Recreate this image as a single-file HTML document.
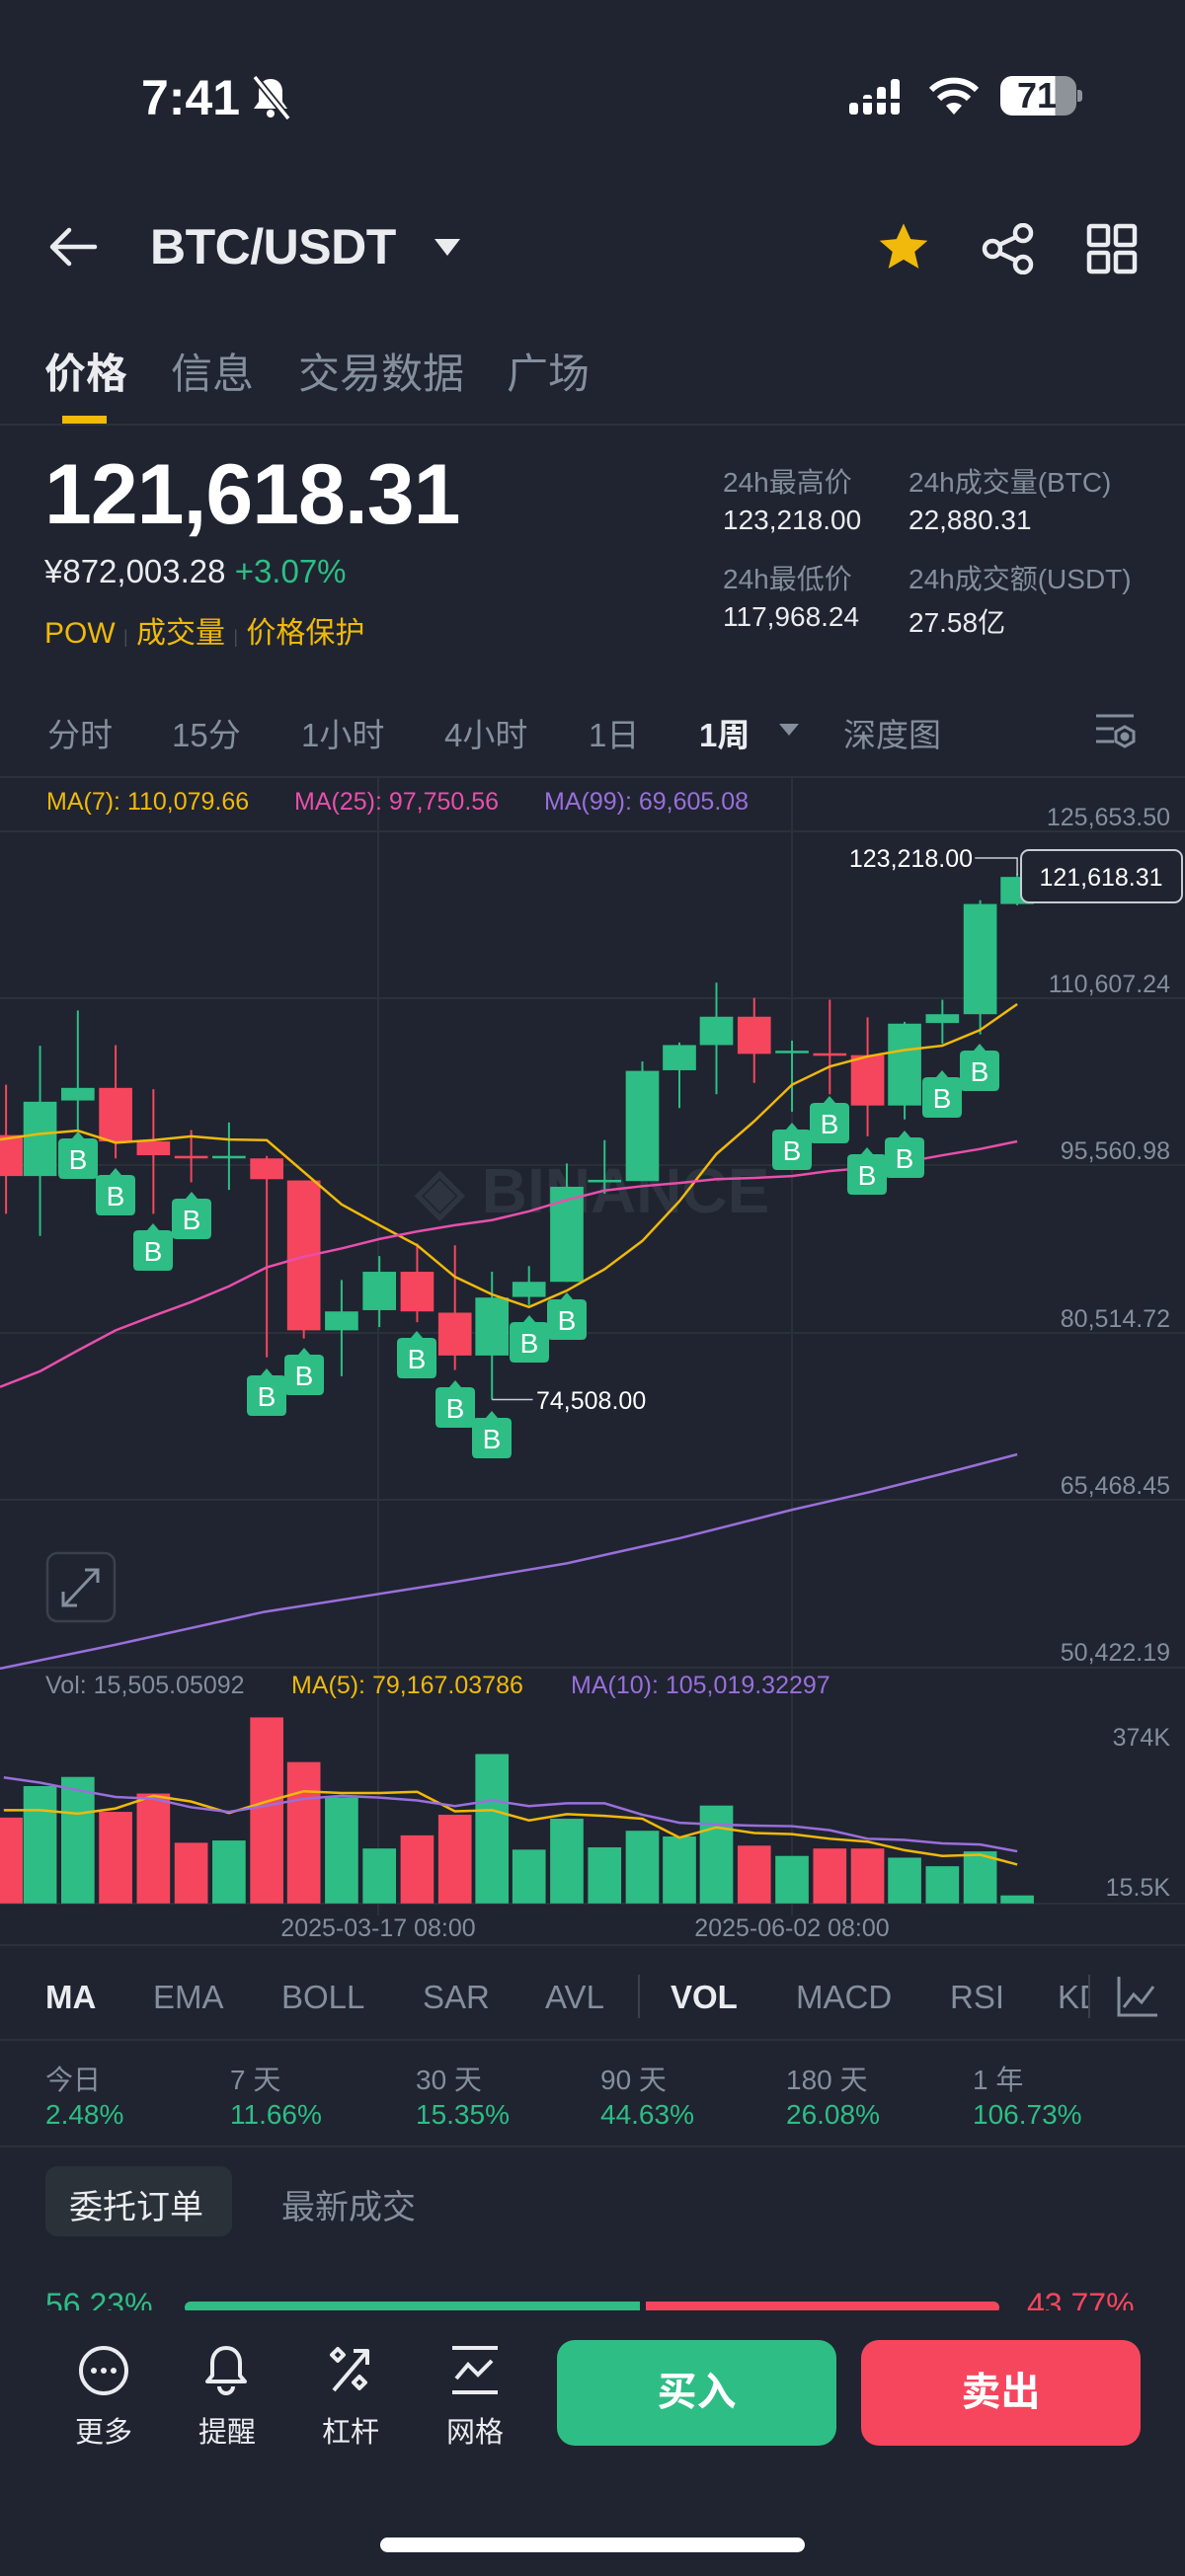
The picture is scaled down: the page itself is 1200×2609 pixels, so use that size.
<!DOCTYPE html>
<html><head><meta charset="utf-8"><style>
*{margin:0;padding:0;box-sizing:border-box}
body{width:1200px;height:2609px;background:#1f2430;font-family:"Liberation Sans","Noto Sans CJK SC",sans-serif;color:#eaecef;position:relative;overflow:hidden}
.a{position:absolute;white-space:nowrap}
.g{color:#848e9c}
.gr{color:#2ebd85}
.y{color:#f0b90b}
</style></head><body>
<!-- status bar -->
<div class="a" style="left:143px;top:70px;font-size:50px;font-weight:bold;color:#fff">7:41</div>
<svg class="a" style="left:252px;top:74px" width="44" height="48" viewBox="0 0 44 48"><path d="M22 6c-8 0-12 6-12 13v10l-5 7h34l-5-7V19c0-7-4-13-12-13z" fill="#fff"/><circle cx="22" cy="41" r="4" fill="#fff"/><line x1="6" y1="4" x2="40" y2="46" stroke="#1f2430" stroke-width="7"/><line x1="6" y1="4" x2="40" y2="46" stroke="#fff" stroke-width="3.5"/></svg>
<svg class="a" style="left:860px;top:78px" width="60" height="40"><g fill="#fff"><rect x="0" y="26" width="9" height="12" rx="3"/><rect x="14" y="18" width="9" height="20" rx="3"/><rect x="28" y="10" width="9" height="28" rx="3"/><rect x="42" y="2" width="9" height="36" rx="3"/></g><g fill="#1f2430"><rect x="0" y="22" width="52" height="4"/></g></svg>
<svg class="a" style="left:940px;top:78px" width="52" height="40" viewBox="0 0 52 40"><path d="M26 38 L18 29 A12 12 0 0 1 34 29Z" fill="#fff"/><path d="M11 22 A21 21 0 0 1 41 22" stroke="#fff" stroke-width="6" fill="none"/><path d="M3 13 A33 33 0 0 1 49 13" stroke="#fff" stroke-width="6" fill="none"/></svg>
<div class="a" style="left:1013px;top:77px;width:77px;height:40px;border-radius:12px;background:linear-gradient(90deg,#fff 0 72%,#8e9299 72%)"></div>
<div class="a" style="left:1091px;top:91px;width:5px;height:12px;border-radius:0 3px 3px 0;background:#8e9299"></div>
<div class="a" style="left:1030px;top:76px;font-size:36px;font-weight:bold;color:#1f2430">71</div>
<!-- header -->
<svg class="a" style="left:48px;top:228px" width="52" height="44" viewBox="0 0 52 44"><path d="M48 22H6M22 5L5 22l17 17" stroke="#eaecef" stroke-width="4.5" fill="none" stroke-linecap="round" stroke-linejoin="round"/></svg>
<div class="a" style="left:152px;top:221px;font-size:50px;font-weight:bold;color:#eaecef;letter-spacing:-0.5px">BTC/USDT</div>
<svg class="a" style="left:440px;top:242px" width="26" height="18"><path d="M0 0H26L13 17Z" fill="#eaecef"/></svg>
<svg class="a" style="left:888px;top:224px" width="54" height="52" viewBox="0 0 24 23"><path d="M12 1l3.2 7 7.6.7-5.8 5 1.8 7.5L12 17.2 5.2 21.2 7 13.7 1.2 8.7l7.6-.7z" fill="#f0b90b"/></svg>
<svg class="a" style="left:993px;top:226px" width="56" height="52" viewBox="0 0 56 52"><g stroke="#eaecef" stroke-width="4.5" fill="none"><circle cx="12" cy="26" r="8"/><circle cx="43" cy="10" r="8"/><circle cx="43" cy="42" r="8"/><path d="M19 22l17-8M19 30l17 8"/></g></svg>
<svg class="a" style="left:1100px;top:226px" width="52" height="52"><g stroke="#eaecef" stroke-width="4.5" fill="none"><rect x="3" y="3" width="19" height="19" rx="2"/><rect x="30" y="3" width="19" height="19" rx="2"/><rect x="3" y="30" width="19" height="19" rx="2"/><rect x="30" y="30" width="19" height="19" rx="2"/></g></svg>
<!-- tabs -->
<div class="a" style="left:45px;top:345px;font-size:42px;font-weight:bold;color:#eaecef">价格</div>
<div class="a g" style="left:173px;top:345px;font-size:42px">信息</div>
<div class="a g" style="left:302px;top:345px;font-size:42px">交易数据</div>
<div class="a g" style="left:513px;top:345px;font-size:42px">广场</div>
<div class="a" style="left:63px;top:421px;width:45px;height:8px;background:#f0b90b"></div>
<div class="a" style="left:0;top:429px;width:1200px;height:2px;background:#2b3139"></div>
<!-- price -->
<div class="a" style="left:45px;top:452px;font-size:86px;font-weight:bold;color:#fff;letter-spacing:-1px">121,618.31</div>
<div class="a" style="left:45px;top:560px;font-size:33px;color:#eaecef">¥872,003.28 <span class="gr">+3.07%</span></div>
<div class="a y" style="left:45px;top:616px;font-size:30px">POW <span style="color:#474d57;font-size:18px">|</span> 成交量 <span style="color:#474d57;font-size:18px">|</span> 价格保护</div>
<div class="a g" style="left:732px;top:467px;font-size:28px">24h最高价</div>
<div class="a" style="left:732px;top:511px;font-size:28px">123,218.00</div>
<div class="a g" style="left:920px;top:467px;font-size:28px">24h成交量(BTC)</div>
<div class="a" style="left:920px;top:511px;font-size:28px">22,880.31</div>
<div class="a g" style="left:732px;top:565px;font-size:28px">24h最低价</div>
<div class="a" style="left:732px;top:609px;font-size:28px">117,968.24</div>
<div class="a g" style="left:920px;top:565px;font-size:28px">24h成交额(USDT)</div>
<div class="a" style="left:920px;top:609px;font-size:28px">27.58亿</div>
<!-- intervals -->
<div class="a g" style="left:48px;top:718px;font-size:33px">分时</div>
<div class="a g" style="left:174px;top:718px;font-size:33px">15分</div>
<div class="a g" style="left:305px;top:718px;font-size:33px">1小时</div>
<div class="a g" style="left:450px;top:718px;font-size:33px">4小时</div>
<div class="a g" style="left:596px;top:718px;font-size:33px">1日</div>
<div class="a" style="left:708px;top:718px;font-size:33px;font-weight:bold">1周</div>
<svg class="a" style="left:789px;top:733px" width="20" height="13"><path d="M0 0H20L10 12Z" fill="#848e9c"/></svg>
<div class="a g" style="left:854px;top:718px;font-size:33px">深度图</div>
<svg class="a" style="left:1108px;top:722px" width="44" height="40"><g stroke="#848e9c" stroke-width="3" fill="none"><path d="M2 3H40M2 16H20M2 29H20"/><path d="M31 14l9 5v10l-9 5-9-5V19z"/><circle cx="31" cy="24" r="3" fill="#848e9c"/></g></svg>
<div class="a" style="left:0;top:786px;width:1200px;height:2px;background:#2b3139"></div>
<!-- chart -->
<svg class="a" style="left:0;top:0" width="1200" height="2000">
<g stroke="#2b3139" stroke-width="2">
<line x1="0" y1="842" x2="1200" y2="842"/><line x1="0" y1="1011" x2="1200" y2="1011"/><line x1="0" y1="1180" x2="1200" y2="1180"/><line x1="0" y1="1350" x2="1200" y2="1350"/><line x1="0" y1="1519" x2="1200" y2="1519"/><line x1="0" y1="1689" x2="1200" y2="1689"/>
<line x1="383" y1="788" x2="383" y2="1940"/><line x1="802" y1="788" x2="802" y2="1940"/>
<line x1="0" y1="1928" x2="1200" y2="1928"/><line x1="0" y1="1970" x2="1200" y2="1970"/>
</g>
<text x="600" y="1228" text-anchor="middle" font-family="Liberation Sans" font-weight="bold" font-size="64" fill="#2e3440">◈ BINANCE</text>
<g transform="translate(0,700) scale(0.7653,0.6378)">
<g stroke="#f6465d"><line x1="8" y1="625" x2="8" y2="830" vector-effect="non-scaling-stroke" stroke-width="2"/><line x1="153" y1="562" x2="153" y2="742" vector-effect="non-scaling-stroke" stroke-width="2"/><line x1="203" y1="632" x2="203" y2="830" vector-effect="non-scaling-stroke" stroke-width="2"/><line x1="253" y1="697" x2="253" y2="780" vector-effect="non-scaling-stroke" stroke-width="2"/><line x1="353" y1="738" x2="353" y2="1058" vector-effect="non-scaling-stroke" stroke-width="2"/><line x1="402" y1="777" x2="402" y2="1028" vector-effect="non-scaling-stroke" stroke-width="2"/><line x1="552" y1="877" x2="552" y2="1002" vector-effect="non-scaling-stroke" stroke-width="2"/><line x1="602" y1="880" x2="602" y2="1078" vector-effect="non-scaling-stroke" stroke-width="2"/><line x1="998" y1="487" x2="998" y2="622" vector-effect="non-scaling-stroke" stroke-width="2"/><line x1="1098" y1="490" x2="1098" y2="640" vector-effect="non-scaling-stroke" stroke-width="2"/><line x1="1148" y1="518" x2="1148" y2="707" vector-effect="non-scaling-stroke" stroke-width="2"/></g>
<g stroke="#2ebd85"><line x1="53" y1="563" x2="53" y2="865" vector-effect="non-scaling-stroke" stroke-width="2"/><line x1="103" y1="507" x2="103" y2="700" vector-effect="non-scaling-stroke" stroke-width="2"/><line x1="303" y1="685" x2="303" y2="792" vector-effect="non-scaling-stroke" stroke-width="2"/><line x1="452" y1="935" x2="452" y2="1088" vector-effect="non-scaling-stroke" stroke-width="2"/><line x1="502" y1="897" x2="502" y2="1010" vector-effect="non-scaling-stroke" stroke-width="2"/><line x1="651" y1="922" x2="651" y2="1125" vector-effect="non-scaling-stroke" stroke-width="2"/><line x1="700" y1="913" x2="700" y2="975" vector-effect="non-scaling-stroke" stroke-width="2"/><line x1="750" y1="750" x2="750" y2="938" vector-effect="non-scaling-stroke" stroke-width="2"/><line x1="800" y1="713" x2="800" y2="798" vector-effect="non-scaling-stroke" stroke-width="2"/><line x1="850" y1="588" x2="850" y2="778" vector-effect="non-scaling-stroke" stroke-width="2"/><line x1="899" y1="558" x2="899" y2="662" vector-effect="non-scaling-stroke" stroke-width="2"/><line x1="948" y1="463" x2="948" y2="640" vector-effect="non-scaling-stroke" stroke-width="2"/><line x1="1048" y1="555" x2="1048" y2="668" vector-effect="non-scaling-stroke" stroke-width="2"/><line x1="1197" y1="525" x2="1197" y2="680" vector-effect="non-scaling-stroke" stroke-width="2"/><line x1="1247" y1="490" x2="1247" y2="560" vector-effect="non-scaling-stroke" stroke-width="2"/><line x1="1297" y1="332" x2="1297" y2="545" vector-effect="non-scaling-stroke" stroke-width="2"/><line x1="1346" y1="290" x2="1346" y2="340" vector-effect="non-scaling-stroke" stroke-width="2"/></g>
<g fill="#f6465d"><rect x="-14" y="705" width="44" height="65"/><rect x="131" y="630" width="44" height="85"/><rect x="181" y="715" width="44" height="22"/><rect x="231" y="738" width="44" height="4"/><rect x="331" y="742" width="44" height="33"/><rect x="380" y="777" width="44" height="238"/><rect x="530" y="922" width="44" height="63"/><rect x="580" y="987" width="44" height="68"/><rect x="976" y="517" width="44" height="59"/><rect x="1076" y="575" width="44" height="4"/><rect x="1126" y="578" width="44" height="80"/></g>
<g fill="#2ebd85"><rect x="31" y="652" width="44" height="118"/><rect x="81" y="630" width="44" height="20"/><rect x="281" y="738" width="44" height="4"/><rect x="430" y="985" width="44" height="30"/><rect x="480" y="922" width="44" height="61"/><rect x="629" y="963" width="44" height="92"/><rect x="678" y="938" width="44" height="24"/><rect x="728" y="787" width="44" height="151"/><rect x="778" y="776" width="44" height="4"/><rect x="828" y="603" width="44" height="175"/><rect x="877" y="562" width="44" height="40"/><rect x="926" y="517" width="44" height="45"/><rect x="1026" y="571" width="44" height="4"/><rect x="1175" y="528" width="44" height="130"/><rect x="1225" y="513" width="44" height="14"/><rect x="1275" y="338" width="44" height="175"/><rect x="1324" y="295" width="44" height="43"/></g>
<polyline fill="none" stroke="#f0b90b" stroke-width="2.5" vector-effect="non-scaling-stroke" points="0,712 53,703 103,698 153,717 203,713 253,707 303,712 353,713 452,815 502,848 552,880 602,930 651,958 700,978 750,952 800,918 850,873 899,810 948,735 998,683 1048,625 1098,596 1148,580 1197,570 1247,563 1297,538 1346,497"/>
<polyline fill="none" stroke="#e84fac" stroke-width="2.5" vector-effect="non-scaling-stroke" points="0,1105 53,1080 103,1047 153,1015 203,992 253,970 303,945 353,915 402,898 452,885 502,870 552,858 602,848 651,840 700,826 750,808 800,793 850,786 899,781 948,775 998,773 1048,770 1098,762 1148,757 1197,748 1247,737 1297,727 1346,715"/>
<polyline fill="none" stroke="#9a6fdb" stroke-width="2.5" vector-effect="non-scaling-stroke" points="0,1552 150,1515 350,1462 600,1415 750,1385 900,1345 1048,1300 1150,1272 1250,1242 1346,1212"/>
<polyline fill="none" stroke="#c8ccd2" stroke-width="1.5" vector-effect="non-scaling-stroke" points="1290,265 1346,265 1346,292"/>
<polyline fill="none" stroke="#c8ccd2" stroke-width="1.5" vector-effect="non-scaling-stroke" points="651,1125 705,1125"/>
</g>
<!-- B markers -->
<defs><path id="bm" d="M-20 -15Q-20 -20 -15 -20H-6L0 -27L6 -20H15Q20 -20 20 -15V16Q20 21 15 21H-15Q-20 21 -20 16Z" fill="#2ebd85"/></defs>
<g font-family="Liberation Sans" font-size="28" fill="#fff" text-anchor="middle">
<g transform="translate(79,1173)"><use href="#bm"/><text y="11">B</text></g>
<g transform="translate(117,1210)"><use href="#bm"/><text y="11">B</text></g>
<g transform="translate(155,1266)"><use href="#bm"/><text y="11">B</text></g>
<g transform="translate(194,1234)"><use href="#bm"/><text y="11">B</text></g>
<g transform="translate(270,1413)"><use href="#bm"/><text y="11">B</text></g>
<g transform="translate(308,1392)"><use href="#bm"/><text y="11">B</text></g>
<g transform="translate(422,1375)"><use href="#bm"/><text y="11">B</text></g>
<g transform="translate(461,1425)"><use href="#bm"/><text y="11">B</text></g>
<g transform="translate(498,1456)"><use href="#bm"/><text y="11">B</text></g>
<g transform="translate(536,1359)"><use href="#bm"/><text y="11">B</text></g>
<g transform="translate(574,1336)"><use href="#bm"/><text y="11">B</text></g>
<g transform="translate(802,1164)"><use href="#bm"/><text y="11">B</text></g>
<g transform="translate(840,1137)"><use href="#bm"/><text y="11">B</text></g>
<g transform="translate(878,1189)"><use href="#bm"/><text y="11">B</text></g>
<g transform="translate(916,1172)"><use href="#bm"/><text y="11">B</text></g>
<g transform="translate(954,1111)"><use href="#bm"/><text y="11">B</text></g>
<g transform="translate(992,1084)"><use href="#bm"/><text y="11">B</text></g>
</g>
<g font-family="Liberation Sans" font-size="25" fill="#848e9c" text-anchor="end">
<text x="1185" y="836">125,653.50</text><text x="1185" y="1005">110,607.24</text><text x="1185" y="1174">95,560.98</text><text x="1185" y="1344">80,514.72</text><text x="1185" y="1513">65,468.45</text><text x="1185" y="1682">50,422.19</text>
<text x="1185" y="1768">374K</text><text x="1185" y="1920">15.5K</text>
</g>
<text x="985" y="878" font-family="Liberation Sans" font-size="25" fill="#fff" text-anchor="end">123,218.00</text>
<text x="543" y="1427" font-family="Liberation Sans" font-size="25" fill="#fff">74,508.00</text>
<rect x="1034" y="861" width="163" height="53" rx="8" fill="#1f2430" stroke="#c8ccd2" stroke-width="2"/>
<text x="1115" y="897" font-family="Liberation Sans" font-size="25" fill="#fff" text-anchor="middle">121,618.31</text>
<rect x="48" y="1573" width="68" height="69" rx="10" fill="none" stroke="#3a414c" stroke-width="2.5"/>
<g stroke="#848e9c" stroke-width="3" fill="none"><path d="M66 1625L98 1591M86 1590H99V1603M64 1612V1626H78"/></g>
<text font-family="Liberation Sans" font-size="25" y="820"><tspan x="47" fill="#f0b90b">MA(7): 110,079.66</tspan><tspan x="298" fill="#e84fac">MA(25): 97,750.56</tspan><tspan x="551" fill="#9a6fdb">MA(99): 69,605.08</tspan></text>
<text font-family="Liberation Sans" font-size="25" y="1715"><tspan x="46" fill="#848e9c">Vol: 15,505.05092</tspan><tspan x="295" fill="#f0b90b">MA(5): 79,167.03786</tspan><tspan x="578" fill="#9a6fdb">MA(10): 105,019.32297</tspan></text>
<!-- volume -->
<g transform="translate(0,1700) scale(0.7653,0.5797)">
<g fill="#f6465d"><rect x="-14" y="243" width="44" height="150"/><rect x="131" y="233" width="44" height="160"/><rect x="181" y="201" width="44" height="192"/><rect x="231" y="287" width="44" height="106"/><rect x="331" y="68" width="44" height="325"/><rect x="380" y="146" width="44" height="247"/><rect x="530" y="274" width="44" height="119"/><rect x="580" y="238" width="44" height="155"/><rect x="976" y="292" width="44" height="101"/><rect x="1076" y="297" width="44" height="96"/><rect x="1126" y="297" width="44" height="96"/></g>
<g fill="#2ebd85"><rect x="31" y="188" width="44" height="205"/><rect x="81" y="172" width="44" height="221"/><rect x="281" y="283" width="44" height="110"/><rect x="430" y="208" width="44" height="185"/><rect x="480" y="297" width="44" height="96"/><rect x="629" y="132" width="44" height="261"/><rect x="678" y="299" width="44" height="94"/><rect x="728" y="245" width="44" height="148"/><rect x="778" y="295" width="44" height="98"/><rect x="828" y="266" width="44" height="127"/><rect x="877" y="276" width="44" height="117"/><rect x="926" y="222" width="44" height="171"/><rect x="1026" y="310" width="44" height="83"/><rect x="1175" y="313" width="44" height="80"/><rect x="1225" y="328" width="44" height="65"/><rect x="1275" y="302" width="44" height="91"/><rect x="1324" y="379" width="44" height="14"/></g>
<polyline fill="none" stroke="#f0b90b" stroke-width="2.5" vector-effect="non-scaling-stroke" points="5,230 53,230 103,236 153,227 203,205 253,215 303,235 353,215 402,197 452,200 502,200 552,198 602,232 651,230 700,248 750,237 800,240 850,245 899,278 948,260 998,270 1048,272 1098,280 1148,285 1197,300 1247,310 1297,308 1346,325"/>
<polyline fill="none" stroke="#9a6fdb" stroke-width="2.5" vector-effect="non-scaling-stroke" points="5,173 53,182 103,195 153,207 203,210 253,225 303,233 353,222 402,210 452,205 502,208 552,213 602,223 651,213 700,223 750,218 800,218 850,238 899,252 948,255 998,257 1048,258 1098,265 1148,280 1197,282 1247,288 1297,290 1346,302"/>
</g>
<g font-family="Liberation Sans" font-size="25" fill="#848e9c" text-anchor="middle"><text x="383" y="1961">2025-03-17 08:00</text><text x="802" y="1961">2025-06-02 08:00</text></g>
</svg>
<!-- indicator tabs -->
<div class="a" style="left:46px;top:2004px;font-size:33px;font-weight:bold;color:#eaecef">MA</div>
<div class="a g" style="left:155px;top:2004px;font-size:33px">EMA</div>
<div class="a g" style="left:285px;top:2004px;font-size:33px">BOLL</div>
<div class="a g" style="left:428px;top:2004px;font-size:33px">SAR</div>
<div class="a g" style="left:552px;top:2004px;font-size:33px">AVL</div>
<div class="a" style="left:646px;top:2000px;width:2px;height:44px;background:#3a414c"></div>
<div class="a" style="left:679px;top:2004px;font-size:33px;font-weight:bold;color:#eaecef">VOL</div>
<div class="a g" style="left:806px;top:2004px;font-size:33px">MACD</div>
<div class="a g" style="left:962px;top:2004px;font-size:33px">RSI</div>
<div class="a g" style="left:1071px;top:2004px;font-size:33px;width:32px;overflow:hidden">KDJ</div>
<div class="a" style="left:1102px;top:2000px;width:2px;height:44px;background:#3a414c"></div>
<svg class="a" style="left:1130px;top:2000px" width="44" height="44"><g stroke="#848e9c" stroke-width="3" fill="none"><path d="M3 2V41H42M8 33L18 20l8 8L38 12"/></g></svg>
<div class="a" style="left:0;top:2065px;width:1200px;height:2px;background:#2b3139"></div>
<!-- stats -->
<div class="a g" style="left:46px;top:2085px;font-size:28px">今日</div><div class="a gr" style="left:46px;top:2126px;font-size:28px">2.48%</div>
<div class="a g" style="left:233px;top:2085px;font-size:28px">7 天</div><div class="a gr" style="left:233px;top:2126px;font-size:28px">11.66%</div>
<div class="a g" style="left:421px;top:2085px;font-size:28px">30 天</div><div class="a gr" style="left:421px;top:2126px;font-size:28px">15.35%</div>
<div class="a g" style="left:608px;top:2085px;font-size:28px">90 天</div><div class="a gr" style="left:608px;top:2126px;font-size:28px">44.63%</div>
<div class="a g" style="left:796px;top:2085px;font-size:28px">180 天</div><div class="a gr" style="left:796px;top:2126px;font-size:28px">26.08%</div>
<div class="a g" style="left:985px;top:2085px;font-size:28px">1 年</div><div class="a gr" style="left:985px;top:2126px;font-size:28px">106.73%</div>
<div class="a" style="left:0;top:2173px;width:1200px;height:2px;background:#2b3139"></div>
<!-- order tabs -->
<div class="a" style="left:46px;top:2194px;width:189px;height:71px;border-radius:12px;background:#2b3139"></div>
<div class="a" style="left:70px;top:2208px;font-size:34px;color:#eaecef">委托订单</div>
<div class="a g" style="left:285px;top:2208px;font-size:34px">最新成交</div>
<div class="a gr" style="left:46px;top:2316px;font-size:32px">56.23%</div>
<div class="a" style="left:1040px;top:2316px;font-size:32px;color:#f6465d">43.77%</div>
<div class="a" style="left:187px;top:2331px;width:461px;height:12px;border-radius:6px 0 0 6px;background:#2ebd85"></div>
<div class="a" style="left:654px;top:2331px;width:358px;height:12px;border-radius:0 6px 6px 0;background:#f6465d"></div>
<!-- bottom nav -->
<div class="a" style="left:0;top:2340px;width:1200px;height:269px;background:#1f2430"></div>
<svg class="a" style="left:78px;top:2373px" width="54" height="56"><circle cx="27" cy="28" r="23" stroke="#eaecef" stroke-width="4" fill="none"/><g fill="#eaecef"><circle cx="17" cy="28" r="3"/><circle cx="27" cy="28" r="3"/><circle cx="37" cy="28" r="3"/></g></svg>
<svg class="a" style="left:202px;top:2373px" width="54" height="56"><path d="M27 5c-9 0-14 7-14 15v13l-5 6h38l-5-6V20c0-8-5-15-14-15z" stroke="#eaecef" stroke-width="4" fill="none" stroke-linejoin="round"/><path d="M20 44a7 7 0 0 0 14 0" stroke="#eaecef" stroke-width="4" fill="none"/></svg>
<svg class="a" style="left:328px;top:2373px" width="54" height="56"><g stroke="#eaecef" stroke-width="4" fill="none" stroke-linejoin="round"><path d="M10 48L44 8M30 8H44V22"/><path d="M14 6l6 6-6 6-6-6z"/><path d="M36 34l6 6-6 6-6-6z"/></g></svg>
<svg class="a" style="left:454px;top:2373px" width="54" height="56"><g stroke="#eaecef" stroke-width="4" fill="none"><path d="M4 5H50M4 50H50"/><path d="M8 36L20 22l10 10 14-14"/></g></svg>
<div class="a" style="left:76px;top:2440px;font-size:29px">更多</div>
<div class="a" style="left:201px;top:2440px;font-size:29px">提醒</div>
<div class="a" style="left:326px;top:2440px;font-size:29px">杠杆</div>
<div class="a" style="left:452px;top:2440px;font-size:29px">网格</div>
<div class="a" style="left:564px;top:2370px;width:283px;height:107px;border-radius:18px;background:#2ebd85;color:#fff;font-size:40px;font-weight:bold;text-align:center;line-height:107px">买入</div>
<div class="a" style="left:872px;top:2370px;width:283px;height:107px;border-radius:18px;background:#f6465d;color:#fff;font-size:40px;font-weight:bold;text-align:center;line-height:107px">卖出</div>
<div class="a" style="left:385px;top:2570px;width:430px;height:15px;border-radius:8px;background:#fff"></div>
</body></html>
